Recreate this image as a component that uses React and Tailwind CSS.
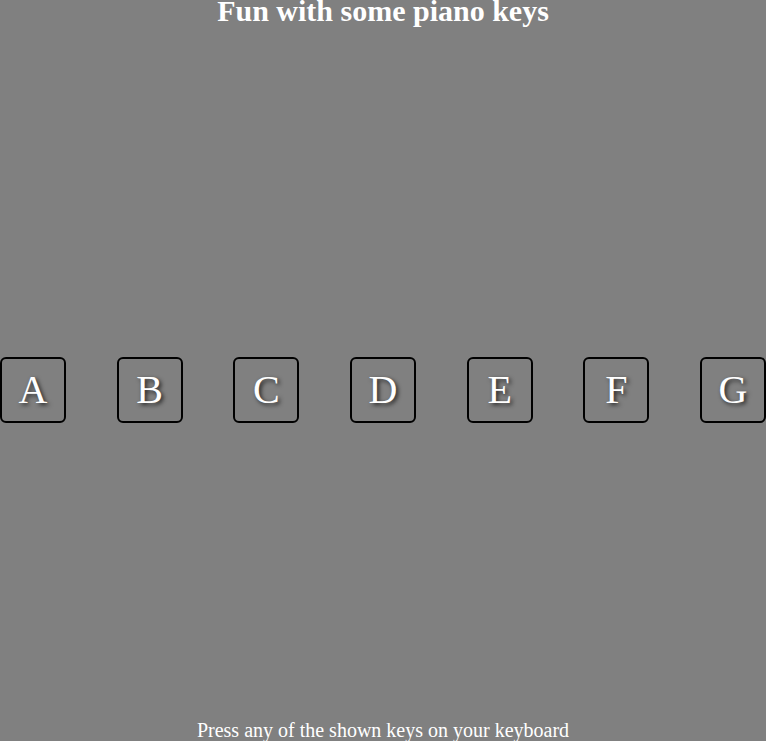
const KEYS = ["A", "B", "C", "D", "E", "F", "G"];

export default function App() {
  return (
    <div className="h-[741px] bg-[#808080] text-white flex flex-col font-['Liberation_Serif',serif] overflow-hidden">
      <h1 className="text-[30px] font-bold leading-[22px] text-center">
        Fun with some piano keys
      </h1>

      <div className="mt-[335px] flex justify-between">
        {KEYS.map((k) => (
          <div
            key={k}
            className="w-[66px] h-[66px] border-2 border-black rounded-[6px] flex items-center justify-center text-[40px] leading-none [text-shadow:2px_2px_4px_#222]"
          >
            {k}
          </div>
        ))}
      </div>

      <div className="mt-auto text-[20px] leading-[21px] text-center">
        Press any of the shown keys on your keyboard
      </div>
    </div>
  );
}
